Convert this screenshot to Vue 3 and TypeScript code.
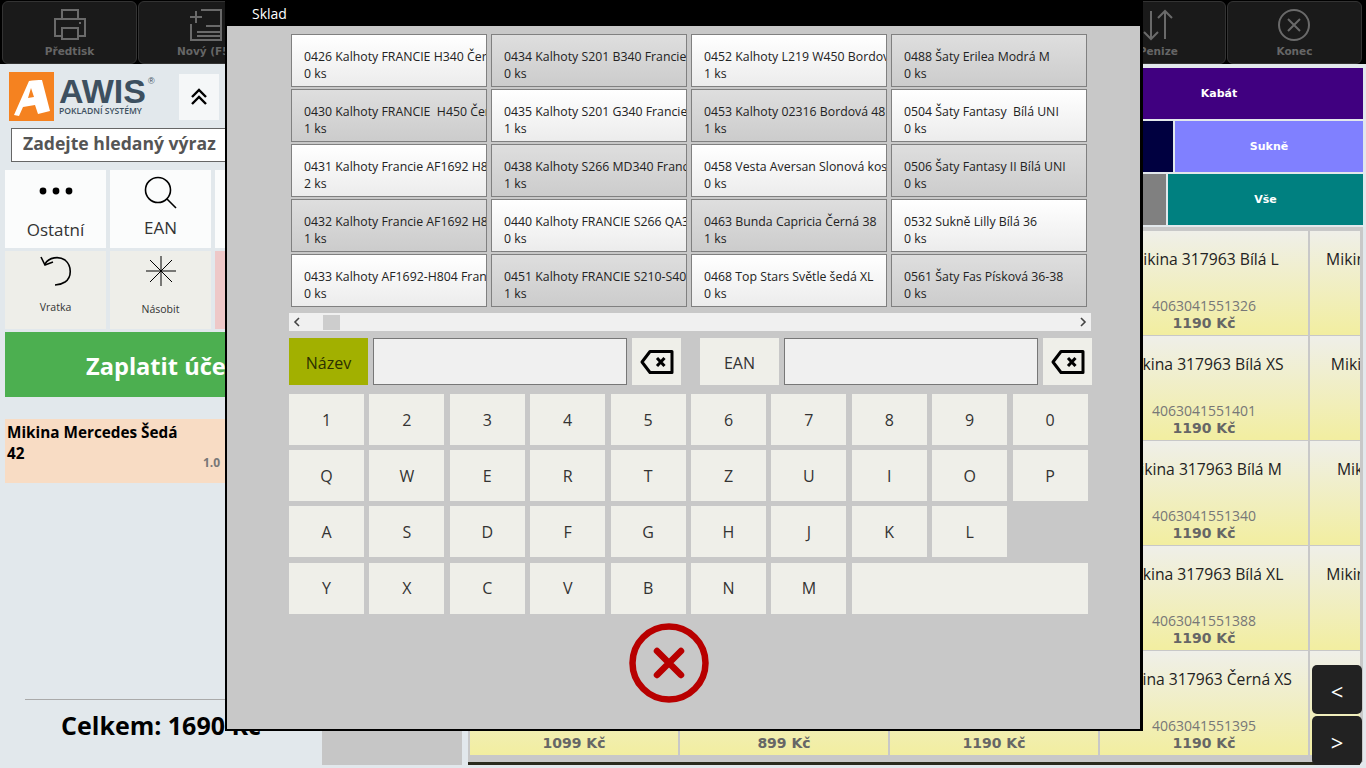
<script setup lang="ts">
interface Item { name: string; qty: string }
interface Card { name?: string; code?: string; price?: string }

const tools = [
  { label: 'Předtisk', icon: 'print' },
  { label: 'Nový (F5)', icon: 'new' },
  { label: '', icon: '' },
  { label: '', icon: '' },
  { label: '', icon: '' },
  { label: '', icon: '' },
  { label: '', icon: '' },
  { label: '', icon: '' },
  { label: 'Penize', icon: 'money' },
  { label: 'Konec', icon: 'end' },
]

const items: Item[] = [
  { name: '0426 Kalhoty FRANCIE H340 Černá', qty: '0 ks' },
  { name: '0434 Kalhoty S201 B340 Francie', qty: '0 ks' },
  { name: '0452 Kalhoty L219 W450 Bordová', qty: '1 ks' },
  { name: '0488 Šaty Erilea Modrá M', qty: '0 ks' },
  { name: '0430 Kalhoty FRANCIE  H450 Černá', qty: '1 ks' },
  { name: '0435 Kalhoty S201 G340 Francie', qty: '1 ks' },
  { name: '0453 Kalhoty 02316 Bordová 48', qty: '1 ks' },
  { name: '0504 Šaty Fantasy  Bílá UNI', qty: '0 ks' },
  { name: '0431 Kalhoty Francie AF1692 H804', qty: '2 ks' },
  { name: '0438 Kalhoty S266 MD340 Francie', qty: '1 ks' },
  { name: '0458 Vesta Aversan Slonová kost', qty: '0 ks' },
  { name: '0506 Šaty Fantasy II Bílá UNI', qty: '0 ks' },
  { name: '0432 Kalhoty Francie AF1692 H804', qty: '1 ks' },
  { name: '0440 Kalhoty FRANCIE S266 QA340', qty: '0 ks' },
  { name: '0463 Bunda Capricia Černá 38', qty: '1 ks' },
  { name: '0532 Sukně Lilly Bílá 36', qty: '0 ks' },
  { name: '0433 Kalhoty AF1692-H804 Francie', qty: '0 ks' },
  { name: '0451 Kalhoty FRANCIE S210-S40', qty: '1 ks' },
  { name: '0468 Top Stars Světle šedá XL', qty: '0 ks' },
  { name: '0561 Šaty Fas Písková 36-38', qty: '0 ks' },
]

const keyRows = [
  ['1', '2', '3', '4', '5', '6', '7', '8', '9', '0'],
  ['Q', 'W', 'E', 'R', 'T', 'Z', 'U', 'I', 'O', 'P'],
  ['A', 'S', 'D', 'F', 'G', 'H', 'J', 'K', 'L'],
  ['Y', 'X', 'C', 'V', 'B', 'N', 'M'],
]

const cards: Card[] = [
  {}, {}, {},
  { name: 'Mikina 317963 Bílá L', code: '4063041551326', price: '1190 Kč' },
  { name: 'Mikina 317963 Černá XS' },
  {}, {}, {},
  { name: 'Mikina 317963 Bílá XS', code: '4063041551401', price: '1190 Kč' },
  { name: 'Mikina 317963 Černá L' },
  {}, {}, {},
  { name: 'Mikina 317963 Bílá M', code: '4063041551340', price: '1190 Kč' },
  { name: 'Mikina 317963 Černá' },
  {}, {}, {},
  { name: 'Mikina 317963 Bílá XL', code: '4063041551388', price: '1190 Kč' },
  { name: 'Mikina 317963 Černá XL' },
  { price: '1099 Kč' }, { price: '899 Kč' }, { price: '1190 Kč' },
  { name: 'Mikina 317963 Černá XS', code: '4063041551395', price: '1190 Kč' },
  {},
]
</script>

<template>
  <div class="app">
    <header class="toolbar">
      <button v-for="(t, i) in tools" :key="i" class="tool">
        <svg v-if="t.icon === 'print'" width="34" height="34" viewBox="0 0 34 34" fill="none" stroke="#6a6a6a" stroke-width="2">
          <path d="M9 11V2h16v9M9 28H2V11h30v17h-7" />
          <path d="M9 20h16v11H9z" />
          <path d="M26 15h2" />
        </svg>
        <svg v-else-if="t.icon === 'new'" width="34" height="34" viewBox="0 0 34 34" fill="none" stroke="#6a6a6a" stroke-width="2">
          <path d="M12 2h20v30H2V16" />
          <path d="M1 9h12M7 3v12" />
          <path d="M17 18h14M8 24h23M8 28h23" />
        </svg>
        <svg v-else-if="t.icon === 'money'" width="34" height="34" viewBox="0 0 34 34" fill="none" stroke="#6a6a6a" stroke-width="2">
          <path d="M10 3v28M3 24l7 7 7-7" />
          <path d="M24 31V3M17 10l7-7 7 7" />
        </svg>
        <svg v-else-if="t.icon === 'end'" width="34" height="34" viewBox="0 0 34 34" fill="none" stroke="#6a6a6a" stroke-width="2">
          <circle cx="17" cy="17" r="15" />
          <path d="M11 11l12 12M23 11L11 23" />
        </svg>
        <span>{{ t.label }}</span>
      </button>
    </header>

    <div class="body">
      <aside class="left">
        <div class="brand">
          <div class="logo">
            <svg width="45" height="49" viewBox="0 0 45 49">
              <rect width="45" height="49" fill="#f58220" />
              <path fill="#fff" fill-rule="evenodd" d="M5 43 20 9c4-1 9-1 13-1l8 31-12 3-3-9-12 2-4 9zM19 26l6-1-3-9z" />
            </svg>
            <div class="wordmark">
              <div class="awis">AWIS<sup>®</sup></div>
              <div class="claim">POKLADNÍ SYSTÉMY</div>
            </div>
          </div>
          <button class="collapse">
            <svg width="22" height="22" viewBox="0 0 22 22" fill="none" stroke="#000" stroke-width="2.4">
              <path d="M4 11l7-7 7 7M4 18l7-7 7 7" />
            </svg>
          </button>
        </div>

        <input class="search" placeholder="Zadejte hledaný výraz" />

        <div class="tiles">
          <div class="tile">
            <svg width="34" height="38" viewBox="0 0 34 38" fill="#000">
              <circle cx="4" cy="16" r="3.400" /><circle cx="17" cy="16" r="3.400" /><circle cx="30" cy="16" r="3.400" />
            </svg>
            <span>Ostatní</span>
          </div>
          <div class="tile">
            <svg width="34" height="36" viewBox="0 0 34 36" fill="none" stroke="#000" stroke-width="1.600">
              <circle cx="14" cy="15" r="12.500" /><path d="M23 24l9 9" />
            </svg>
            <span>EAN</span>
          </div>
          <div class="tile"></div>
          <div class="tile alt">
            <svg width="34" height="34" viewBox="0 0 34 34" fill="none" stroke="#000" stroke-width="1.600">
              <path d="M6 10C10 3 20 2 26 6c7 6 7 17 0 22-3 2-6 3-10 3" />
              <path d="M2 3l4 8 8-3" />
            </svg>
            <small>Vratka</small>
          </div>
          <div class="tile alt mult">
            <svg width="32" height="32" viewBox="0 0 32 32" fill="none" stroke="#000" stroke-width="1">
              <path d="M16 1v30M1 16h30M5 5l22 22M27 5 5 27" />
            </svg>
            <small>Násobit</small>
          </div>
          <div class="tile pink"></div>
        </div>

        <button class="pay">Zaplatit účet</button>

        <div class="receipt">
          <strong>Mikina Mercedes Šedá<br />42</strong>
          <em>1.0</em>
        </div>

        <div class="total">Celkem: 1690 Kč</div>
      </aside>

      <div class="middle"></div>

      <main class="right">
        <div class="cats">
          <div class="cat-row"><div class="cat" style="background: #400080; flex: 0 0 288px">Kabát</div></div>
          <div class="cat-row">
            <div class="cat" style="background: #000040; flex: 1"></div>
            <div class="cat" style="background: #8080ff; flex: 0 0 188px">Sukně</div>
          </div>
          <div class="cat-row">
            <div class="cat" style="background: #808080; flex: 1"></div>
            <div class="cat" style="background: #008080; flex: 0 0 195px">Vše</div>
          </div>
        </div>
        <div class="products">
          <div class="product-grid">
            <div v-for="(c, i) in cards" :key="i" class="card">
              <div class="card-name">{{ c.name }}</div>
              <div class="card-code">{{ c.code }}</div>
              <div class="card-price">{{ c.price }}</div>
            </div>
          </div>
        </div>
      </main>
    </div>

    <div class="pager">
      <button>&lt;</button>
      <button>&gt;</button>
    </div>

    <section class="modal">
      <div class="modal-title">Sklad</div>
      <div class="modal-body">
        <div class="stock">
          <div v-for="(it, i) in items" :key="i" class="stock-item" :class="{ dark: (i + Math.floor(i / 4)) % 2 === 1 }">
            <div>{{ it.name }}</div>
            <div>{{ it.qty }}</div>
          </div>
        </div>

        <div class="scrollbar">
          <svg width="8" height="10" viewBox="0 0 8 10" fill="none" stroke="#444" stroke-width="1.600"><path d="M6 1 2 5l4 4" /></svg>
          <div class="thumb"></div>
          <svg width="8" height="10" viewBox="0 0 8 10" fill="none" stroke="#444" stroke-width="1.600"><path d="M2 1l4 4-4 4" /></svg>
        </div>

        <div class="filters">
          <button class="filter active">Název</button>
          <input class="field" />
          <button class="clear">
            <svg width="34" height="26" viewBox="0 0 34 26" fill="none" stroke="#000" stroke-width="3" stroke-linejoin="round">
              <path d="M10 2.500h22v21H10L2 13z" />
              <path d="M17 9l7.500 8M24.500 9 17 17" />
            </svg>
          </button>
          <button class="filter ean">EAN</button>
          <input class="field" />
          <button class="clear">
            <svg width="34" height="26" viewBox="0 0 34 26" fill="none" stroke="#000" stroke-width="3" stroke-linejoin="round">
              <path d="M10 2.500h22v21H10L2 13z" />
              <path d="M17 9l7.500 8M24.500 9 17 17" />
            </svg>
          </button>
        </div>

        <div class="keys">
          <template v-for="(row, r) in keyRows" :key="r">
            <button v-for="k in row" :key="k" class="key">{{ k }}</button>
          </template>
          <div class="key-gap"></div>
          <button class="key space"></button>
        </div>

        <button class="close">
          <svg width="80" height="80" viewBox="0 0 80 80" fill="none" stroke="#b80000">
            <circle cx="40" cy="40" r="36.500" stroke-width="6.500" />
            <path d="M28 28l24 24M52 28 28 52" stroke-width="6.500" stroke-linecap="round" />
          </svg>
        </button>
      </div>
    </section>
  </div>
</template>

<style>
html, body {
  margin: 0;
  overflow: hidden;
}
</style>

<style scoped>
* {
  box-sizing: border-box;
}
button, input {
  font-family: inherit;
  padding: 0;
  border: 0;
}
.app {
  position: relative;
  width: 1366px;
  height: 768px;
  display: flex;
  flex-direction: column;
  overflow: hidden;
  background: #e2e8ec;
  font-family: "Open Sans", sans-serif;
  color: #222;
}

/* top bar */
.toolbar {
  height: 64px;
  flex: none;
  display: grid;
  grid-template-columns: repeat(10, 1fr);
  gap: 1px;
  padding: 1px 4px 0 2px;
  background: #000;
}
.tool {
  height: 63px;
  display: flex;
  flex-direction: column;
  align-items: center;
  justify-content: flex-end;
  gap: 3px;
  padding-bottom: 6px;
  border: 1px solid #333;
  border-radius: 6px;
  background: #1a1a1a;
  color: #666;
  font: bold 10.5px "DejaVu Sans", sans-serif;
}

.body {
  flex: 1;
  display: flex;
  min-height: 0;
}

/* left column */
.left {
  width: 322px;
  flex: none;
  display: flex;
  flex-direction: column;
  padding-top: 8px;
}
.brand {
  display: flex;
  align-items: center;
  height: 49px;
  padding-left: 9px;
}
.logo {
  display: flex;
  gap: 5px;
  width: 170px;
}
.wordmark {
  color: #3d5060;
  padding-top: 5px;
}
.awis {
  font: bold 34px/29px "Liberation Sans", sans-serif;
}
.awis sup {
  font-size: 9px;
  font-weight: normal;
  vertical-align: 19px;
  line-height: 0;
  margin-left: 2px;
}
.claim {
  font: 600 8.600px/10px "Open Sans", sans-serif;
  white-space: nowrap;
}
.collapse {
  width: 40px;
  height: 46px;
  display: flex;
  align-items: center;
  justify-content: center;
  background: #f5f7f8;
}
.search {
  height: 34px;
  width: 305px;
  margin: 7px 0 0 11px;
  padding: 0 0 5px 11px;
  border: 1px solid #666;
  background: #fff;
  font-size: 17.600px;
  font-weight: 700;
}
.search::placeholder {
  color: #555;
  opacity: 1;
}
.tiles {
  display: grid;
  grid-template-columns: repeat(3, 101px);
  grid-auto-rows: 78px;
  column-gap: 4px;
  row-gap: 3px;
  margin: 8px 0 0 5px;
}
.tile {
  display: flex;
  flex-direction: column;
  align-items: center;
  justify-content: flex-start;
  padding-top: 5px;
  background: #fbfcfc;
  font-size: 17px;
  color: #333;
}
.tile span {
  margin-top: 5px;
}
.tile.alt {
  background: #eeeee9;
  padding-top: 3px;
}
.tile.mult {
  padding-top: 4px;
}
.tile.pink {
  background: #eec8c8;
}
.tile small {
  font-size: 10.500px;
  margin-top: 12px;
}
.tile.mult small {
  margin-top: 15px;
}
.pay {
  width: 312px;
  height: 65px;
  margin: 3px 0 0 5px;
  padding-top: 3px;
  background: #4caf50;
  color: #fff;
  font-size: 23.600px;
  font-weight: 700;
}
.receipt {
  height: 64px;
  width: 312px;
  margin: 22px 0 0 5px;
  padding: 3px 2px;
  background: #f8dcc4;
  color: #000;
  font-size: 15.300px;
  line-height: 21px;
}
.receipt strong {
  display: block;
}
.receipt em {
  display: block;
  margin: -9px 0 0 196px;
  font: bold 12px/16px "Open Sans", sans-serif;
  color: #777;
}
.total {
  margin: auto 25px 0;
  height: 69px;
  border-top: 1px solid #aaa;
  padding-top: 8px;
  text-align: center;
  color: #000;
  font-size: 25px;
  font-weight: 700;
  white-space: nowrap;
}

.middle {
  width: 140px;
  flex: none;
  margin-bottom: 3px;
  background: #c6c6c6;
}

/* right column */
.right {
  flex: 1;
  min-width: 0;
  margin-left: 6px;
  padding-top: 4px;
  display: flex;
  flex-direction: column;
}
.cats {
  display: flex;
  flex-direction: column;
  align-items: stretch;
  gap: 2px;
  padding-right: 3px;
}
.cat-row {
  height: 51px;
  display: flex;
  justify-content: flex-end;
  gap: 2px;
}
.cat {
  display: flex;
  align-items: center;
  justify-content: center;
  color: #fff;
  font: bold 11px "DejaVu Sans", sans-serif;
}
.products {
  margin: 2px 3px 0 0;
  height: 535px;
  padding: 4px 3px 0 2px;
  background: #c8c8c8;
}
.product-grid {
  display: grid;
  grid-template-columns: repeat(5, 210px);
  grid-auto-rows: 105px;
  width: 890px;
  overflow: hidden;
}
.card {
  display: flex;
  flex-direction: column;
  align-items: center;
  padding: 18px 0 3px;
  margin: 0 2px 1px 0;
  background: linear-gradient(#efefe9, #f2eea0);
  white-space: nowrap;
}
.card-name {
  font-size: 15.700px;
  line-height: 21px;
  color: #222;
}
.card-code {
  margin-top: auto;
  font-size: 14px;
  line-height: 17px;
  color: #777;
}
.card-price {
  font: bold 14px/18px "DejaVu Sans", sans-serif;
  color: #666;
}
.right::after {
  content: "";
  height: 3px;
  margin: 0 6px 0 0;
  background: #2a2a1c;
}

.pager {
  position: absolute;
  right: 4px;
  bottom: 3px;
  width: 50px;
  display: flex;
  flex-direction: column;
  gap: 2px;
}
.pager button {
  height: 49px;
  padding-top: 3px;
  border-radius: 5px;
  background: #222;
  color: #fff;
  font: 22px "Open Sans", sans-serif;
}

/* sklad dialog */
.modal {
  position: absolute;
  top: 0;
  left: 225px;
  width: 918px;
  height: 731px;
  display: flex;
  flex-direction: column;
  border: solid #000;
  border-width: 0 3px 2px 2px;
  background: #c8c8c8;
}
.modal-title {
  height: 26px;
  flex: none;
  padding-left: 25px;
  background: #000;
  color: #fff;
  font-size: 14px;
  line-height: 27px;
}
.modal-body {
  width: 803px;
  margin-left: 62px;
  padding-top: 8px;
}
.stock {
  display: grid;
  grid-template-columns: repeat(4, 196px);
  grid-auto-rows: 53px;
  column-gap: 4px;
  row-gap: 2px;
  margin-left: 2px;
}
.stock-item {
  display: flex;
  flex-direction: column;
  justify-content: center;
  padding: 8px 0 0 12px;
  border: 1px solid #808080;
  background: linear-gradient(#fff, #ececec);
  font-size: 12.300px;
  line-height: 17px;
  white-space: pre;
  overflow: hidden;
}
.stock-item.dark {
  background: linear-gradient(#dedede, #cccccc);
}
.scrollbar {
  height: 18px;
  margin-top: 6px;
  width: 802px;
  display: flex;
  align-items: center;
  padding: 0 4px;
  background: #f0f0f0;
}
.thumb {
  width: 17px;
  height: 15px;
  margin: 0 auto 0 22px;
  background: #cdcdcd;
}
.filters {
  display: flex;
  height: 47px;
  margin-top: 7px;
}
.filter {
  width: 79px;
  padding-top: 2px;
  background: #efefe9;
  color: #333;
  font-size: 16px;
}
.filter.active {
  background: #a2b000;
  color: #2c3000;
}
.filter.ean {
  margin-left: 19px;
}
.field {
  width: 254px;
  margin-left: 5px;
  border: 1px solid #777;
  background: #f0f0f0;
}
.clear {
  width: 49px;
  margin-left: 5px;
  display: flex;
  align-items: center;
  justify-content: center;
  background: #efefe9;
}
.keys {
  display: grid;
  grid-template-columns: repeat(10, 75px);
  grid-auto-rows: 51px;
  column-gap: 5.400px;
  row-gap: 5.200px;
  margin-top: 9px;
}
.key {
  background: #efefe9;
  color: #333;
  font-size: 16px;
}
.key-gap {
  grid-column: 10;
  grid-row: 3;
}
.key.space {
  grid-column: 8 / span 3;
  grid-row: 4;
}
.close {
  display: block;
  margin: 9px auto 0;
  width: 80px;
  height: 80px;
  background: none;
  transform: translateX(-22px);
}
</style>
